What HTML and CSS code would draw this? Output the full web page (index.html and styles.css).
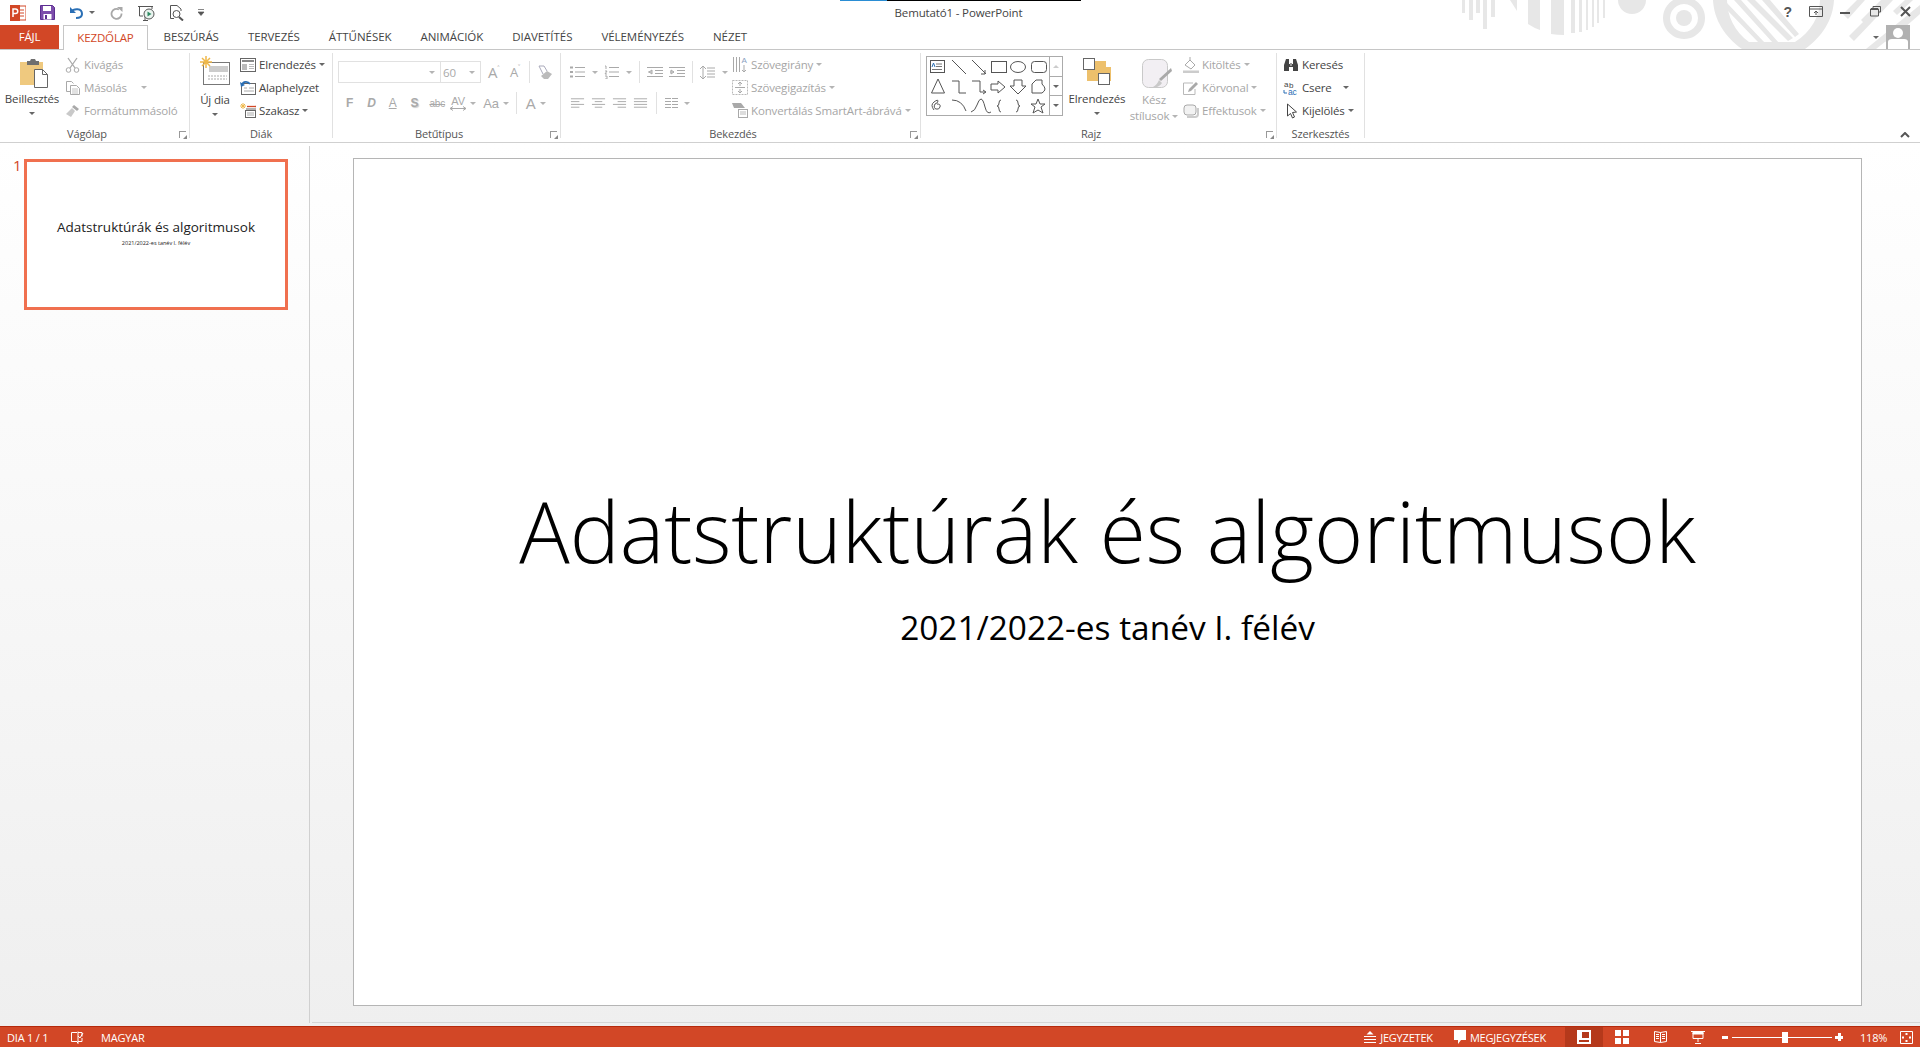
FILE: index.html
```html
<!DOCTYPE html>
<html lang="hu">
<head>
    <meta charset="UTF-8">
    <title>Bemutató1 - PowerPoint</title>
    <link rel="stylesheet" href="styles.css">
</head>
<body>
<svg class="defs" width="0" height="0">
    <symbol id="i-align-l" viewBox="0 0 16 12"><path d="M1 1.500h14M1 4.500h9M1 7.500h14M1 10.500h9" stroke="#a9a9a9" fill="none"/></symbol>
    <symbol id="i-align-c" viewBox="0 0 16 12"><path d="M1 1.500h14M4 4.500h8M1 7.500h14M4 10.500h8" stroke="#a9a9a9" fill="none"/></symbol>
    <symbol id="i-align-r" viewBox="0 0 16 12"><path d="M1 1.500h14M6 4.500h9M1 7.500h14M6 10.500h9" stroke="#a9a9a9" fill="none"/></symbol>
    <symbol id="i-align-j" viewBox="0 0 16 12"><path d="M1 1.500h14M1 4.500h14M1 7.500h14M1 10.500h14" stroke="#a9a9a9" fill="none"/></symbol>
</svg>

<header class="titlebar">
    <svg class="decor" width="460" height="49" viewBox="1460 0 460 49">
        <g fill="#e7e7e7">
            <rect x="1462" y="0" width="3" height="13"/>
            <rect x="1469" y="0" width="4" height="20"/>
            <rect x="1476" y="0" width="4" height="13"/>
            <rect x="1483" y="0" width="4" height="29"/>
            <rect x="1491" y="0" width="4" height="17"/>
            <path d="M1510 0h7v11z"/>
            <path d="M1528 0h12v30q-6-2-12-6z"/>
            <path d="M1551 0h13v35q-7 0-13-1z"/>
            <path d="M1571 0h4v33h-4zM1579 0h3v32h-3zM1586 0h2v30h-2zM1592 0h2v27h-2zM1597 0h2v23h-2zM1603 0h2v18h-2z"/>
            <path d="M1618 0h28a14 14 0 0 1-28 0z"/>
            <path fill-rule="evenodd" d="M1684 -3a21 21 0 1 0 .01 0zM1684 4a14 14 0 1 1-.01 0z"/>
            <circle cx="1684" cy="18" r="8"/>
            <path fill-rule="evenodd" d="M1713 0h121c-1 20-12 37-29 49h-63c-17-12-28-29-29-49zM1727 0c0 16 8 32 22 42h46c16-10 25-26 25-42z"/>
            <path d="M1727 3l38 40h-6l-32-33zM1734 0h7l38 43h-6zM1747 0h8l38 38-5 3zM1762 0h8l29 34-4 3z"/>
            <path d="M1849 36l36-36h8l-39 41zM1843 14l14-14h8l-17 19zM1861 20l20-20h7l-22 25zM1882 38l38-32v8l-33 29zM1905 0h8l-16 15-4-4zM1866 49l54-44v9l-44 35z"/>
        </g>
    </svg>
    <div class="qat">
        <svg class="qat-logo" width="16" height="16" viewBox="0 0 16 16"><rect x="6" y="1" width="10" height="14" fill="#fff" stroke="#d24726"/><path d="M9 5h5M9 8h5M9 11h5" stroke="#d24726"/><rect y="0" width="10" height="16" fill="#d24726"/><path d="M3 12V4h2.500a2 2 0 0 1 0 4.500H3" fill="none" stroke="#fff" stroke-width="1.500"/></svg>
        <svg class="qat-save" width="15" height="15" viewBox="0 0 15 15"><path d="M.5.500h12l2 2v12H.5z" fill="#7c4dab" stroke="#5c2d91"/><rect x="3" y="1" width="8" height="5" fill="#fff"/><rect x="3.500" y="9" width="8" height="5.500" fill="#fff"/><rect x="5" y="10" width="2" height="4" fill="#5c2d91"/></svg>
        <svg class="qat-undo" width="15" height="14" viewBox="0 0 15 14"><path d="M2 6c3-4 11-4 11 2 0 3-3 4-6 4" fill="none" stroke="#2a6fb5" stroke-width="2"/><path d="M1 1v6h6z" fill="#2a6fb5"/></svg>
        <span class="caret qat-caret"></span>
        <svg class="qat-redo" width="13" height="14" viewBox="0 0 13 14"><path d="M9 3.500a5 5 0 1 0 2.500 4" fill="none" stroke="#a8a8a8" stroke-width="1.800"/><path d="M7 1h5.500v5z" fill="#a8a8a8"/></svg>
        <svg class="qat-show" width="18" height="16" viewBox="0 0 18 16"><path d="M1 1.500h15M2.500 2v9H6M15 2v2M6 15.500h5M8 11v4" stroke="#555" fill="none"/><circle cx="12" cy="9" r="5" fill="#eaf4ef" stroke="#555"/><path d="M10.500 6.500v5l4-2.500z" fill="#2f8a63"/></svg>
        <svg class="qat-preview" width="16" height="16" viewBox="0 0 16 16"><path d="M8 .500H1.500v13H5M8 .500l4 3.500v2" fill="none" stroke="#555"/><circle cx="7.500" cy="9" r="3.500" fill="#fff" stroke="#555"/><path d="M10 12l4 3.500" stroke="#555" stroke-width="2"/></svg>
        <svg class="qat-custom" width="7" height="7" viewBox="0 0 7 7"><path d="M0 .500h6M0 3h6l-3 3.500z" fill="#555" stroke="#555" stroke-width=".7"/></svg>
    </div>
    <div class="doc-title">Bemutató1 - PowerPoint</div>
    <div class="win-controls">
        <span class="help">?</span>
        <svg width="14" height="11" viewBox="0 0 14 11"><path d="M.5.500h13v10H.5zM.5 3h13M7 9V5M5 7l2-2 2 2" fill="none" stroke="#555"/></svg>
        <svg width="10" height="11" viewBox="0 0 10 11"><rect y="6" width="10" height="2" fill="#555"/></svg>
        <svg class="win-restore" width="11" height="11" viewBox="0 0 11 11"><path d="M3 2V.500h7.500v5.500H8.500M.5 3h8v7h-8z" fill="none" stroke="#555"/><path d="M1 3h7" stroke="#555" stroke-width="2"/></svg>
        <svg class="win-close" width="11" height="11" viewBox="0 0 11 11"><path d="M1 1l9 9M10 1l-9 9" stroke="#555" stroke-width="2"/></svg>
    </div>
</header>

<nav class="tabs">
    <div class="tab-file">FÁJL</div>
    <div class="tab-active">KEZDŐLAP</div>
    <div class="tab">BESZÚRÁS</div>
    <div class="tab">TERVEZÉS</div>
    <div class="tab">ÁTTŰNÉSEK</div>
    <div class="tab">ANIMÁCIÓK</div>
    <div class="tab">DIAVETÍTÉS</div>
    <div class="tab">VÉLEMÉNYEZÉS</div>
    <div class="tab">NÉZET</div>
    <div class="account">
        <span class="caret"></span>
        <svg width="24" height="24" viewBox="0 0 24 24"><rect width="24" height="24" fill="#b1b1b1"/><circle cx="12" cy="8" r="5" fill="#fff"/><path d="M2 24v-7q0-3 4-3h12q4 0 4 3v7z" fill="#fff"/></svg>
    </div>
</nav>

<section class="ribbon">
    <div class="group group-clip">
        <div class="group-body">
            <div class="big big-paste">
                <svg width="30" height="30" viewBox="0 0 30 30"><path d="M1 4h23v23H1z" fill="#efc97f"/><path d="M8 3h3l1-2h4l1 2h3v4H8z" fill="#6f6f6f"/><path d="M15.500 11.500h8l5 5v13h-13z" fill="#fff" stroke="#666"/><path d="M23.500 11.500v5h5" fill="none" stroke="#666"/></svg>
                <span class="big-label">Beillesztés</span>
                <span class="caret"></span>
            </div>
            <div class="stack">
                <div class="row off"><svg width="16" height="16" viewBox="0 0 16 16"><circle cx="3.500" cy="13" r="2.300" fill="none" stroke="#a9a9a9"/><circle cx="11.500" cy="13" r="2.300" fill="none" stroke="#a9a9a9"/><path d="M5 11L12 1M10 11L3 1" stroke="#a9a9a9" stroke-width="1.300"/></svg>Kivágás</div>
                <div class="row off"><svg width="16" height="16" viewBox="0 0 16 16"><path d="M1.500 1.500h5l2 2M1.500 1.500v10H5M5.500 5.500h6l3 3v6h-9z" fill="none" stroke="#a9a9a9"/><path d="M7 9h6M7 11h6M7 13h6" stroke="#c4c4c4"/></svg>Másolás<span class="caret wide"></span></div>
                <div class="row off"><svg width="16" height="16" viewBox="0 0 16 16"><path d="M9 2l5 4-2 2-5-4z" fill="#a9a9a9"/><path d="M7 5l3 3-4 6-5-3z" fill="#c9c9c9"/></svg>Formátummásoló</div>
            </div>
        </div>
        <div class="group-label has-launcher">Vágólap<span class="launcher"></span></div>
    </div>

    <div class="group group-slides">
        <div class="group-body">
            <div class="big big-new">
                <svg width="30" height="30" viewBox="0 0 30 30"><rect x="3.500" y="6.500" width="26" height="22" fill="#fff" stroke="#777"/><rect x="9" y="10" width="19" height="6" fill="#ccc"/><path d="M8 20h19M8 23h19" stroke="#aaa" stroke-dasharray="2 1"/><path d="M6 0v12M0 6h12M2 2l8 8M10 2l-8 8" stroke="#efb84a" stroke-width="1.500"/></svg>
                <span class="big-label">Új dia</span>
                <span class="caret"></span>
            </div>
            <div class="stack">
                <div class="row"><svg width="16" height="14" viewBox="0 0 16 14"><rect x=".5" y=".5" width="15" height="13" fill="#fff" stroke="#666"/><path d="M2 3h12" stroke="#888" stroke-width="2"/><rect x="2" y="6" width="5" height="6" fill="#bbb"/><path d="M9 6.500h5M9 8.500h5M9 10.500h5" stroke="#bbb"/></svg>Elrendezés<span class="caret"></span></div>
                <div class="row"><svg width="16" height="15" viewBox="0 0 16 15"><rect x="1.500" y="3.500" width="14" height="11" fill="#fff" stroke="#666"/><path d="M4 8h3M9 8h5M4 11h10" stroke="#aaa"/><path d="M2 5c1-4 6-4 8-1" fill="none" stroke="#2a6fb5" stroke-width="1.800"/><path d="M0 2l1 5 4-2z" fill="#2a6fb5"/></svg>Alaphelyzet</div>
                <div class="row"><svg width="16" height="15" viewBox="0 0 16 15"><rect x="5.500" y="7.500" width="10" height="7" fill="#fff" stroke="#666"/><path d="M7 3.500h9" stroke="#d24726" stroke-width="1.300"/><path d="M6 6h10" stroke="#666"/><path d="M3 0v6M0 3h6M1 1l4 4M5 1L1 5" stroke="#efb84a"/><path d="M7 10h7M7 12h7" stroke="#aaa"/></svg>Szakasz<span class="caret"></span></div>
            </div>
        </div>
        <div class="group-label">Diák</div>
    </div>

    <div class="group group-font">
        <div class="group-body grid-rows">
            <div class="tools tools-top">
                <div class="combo combo-name"><span class="caret"></span></div>
                <div class="combo combo-size"><span class="size">60</span><span class="caret"></span></div>
                <span class="glyph g-grow">A<sup>˄</sup></span>
                <span class="glyph g-shrink">A<sup>˅</sup></span>
                <span class="vsep"></span>
                <svg class="g-eraser" width="15" height="15" viewBox="0 0 15 15"><path d="M9 6l5 3-4 5H6L3 11z" fill="#bbb"/><path d="M5 9L1 1h5l3 5" fill="none" stroke="#aab" /></svg>
            </div>
            <div class="tools tools-bottom">
                <span class="fmt fmt-f">F</span>
                <span class="fmt fmt-d">D</span>
                <span class="fmt fmt-a">A</span>
                <span class="fmt fmt-s">S</span>
                <span class="fmt fmt-abc">abc</span>
                <span class="fmt-av">AV<svg width="16" height="5" viewBox="0 0 16 5"><path d="M0 2.500h16M3 .5l-3 2 3 2M13 .5l3 2-3 2" fill="none" stroke="#a9a9a9"/></svg></span>
                <span class="caret"></span>
                <span class="fmt fmt-aa">Aa</span>
                <span class="caret"></span>
                <span class="vsep"></span>
                <span class="fmt fmt-color">A</span>
                <span class="caret"></span>
            </div>
        </div>
        <div class="group-label has-launcher">Betűtípus<span class="launcher"></span></div>
    </div>

    <div class="group group-para">
        <div class="group-body">
            <div class="grid-rows para-left">
                <div class="tools para-top">
                    <svg width="15" height="14" viewBox="0 0 15 14"><path d="M5 2.500h10M5 7h10M5 11.500h10" stroke="#a9a9a9"/><path d="M0 1.500h3v2H0zM0 6h3v2H0zM0 10.500h3v2H0z" fill="#a9a9a9"/></svg>
                    <span class="caret"></span>
                    <svg class="p-num" width="15" height="14" viewBox="0 0 15 14"><path d="M5 2.500h10M5 7h10M5 11.500h10" stroke="#a9a9a9"/><path d="M1 1h1v3M1 6h2L1 9h2M1 11h2v3H1" fill="none" stroke="#a9a9a9"/></svg>
                    <span class="caret"></span>
                    <span class="vsep"></span>
                    <svg width="16" height="11" viewBox="0 0 16 11"><path d="M0 .5h16M8 3.500h8M8 6.500h8M0 9.500h16M5 3L2 5l3 2zM1 5h4" stroke="#a9a9a9" fill="none"/></svg>
                    <svg class="p-ind" width="16" height="11" viewBox="0 0 16 11"><path d="M0 .5h16M8 3.500h8M8 6.500h8M0 9.500h16M2 3l3 2-3 2zM1 5h4" stroke="#a9a9a9" fill="none"/></svg>
                    <span class="vsep"></span>
                    <svg width="15" height="15" viewBox="0 0 15 15"><path d="M3 1v13M0 4l3-3 3 3M0 11l3 3 3-3M7 3h8M7 6h8M7 9h8M7 12h8" stroke="#a9a9a9" fill="none"/></svg>
                    <span class="caret"></span>
                </div>
                <div class="tools para-bottom">
                    <svg width="15" height="12"><use href="#i-align-l"/></svg>
                    <svg width="15" height="12"><use href="#i-align-c"/></svg>
                    <svg width="15" height="12"><use href="#i-align-r"/></svg>
                    <svg width="15" height="12"><use href="#i-align-j"/></svg>
                    <span class="vsep"></span>
                    <svg width="13" height="12" viewBox="0 0 13 12"><path d="M0 1.500h6M7 1.500h6M0 4.500h6M7 4.500h6M0 7.500h6M7 7.500h6M0 10.500h6M7 10.500h6" stroke="#a9a9a9"/></svg>
                    <span class="caret"></span>
                </div>
            </div>
            <div class="stack para-right">
                <div class="row off"><svg width="16" height="17" viewBox="0 0 16 17"><path d="M1.500 1v15M4.500 1v15M7.500 1v15" stroke="#a9a9a9"/><text x="9.500" y="7" font-size="8" fill="#8aa0c0" font-family="Liberation Sans">A</text><path d="M12 9v7M10 14l2 2 2-2" fill="none" stroke="#a9a9a9"/></svg>Szövegirány<span class="caret"></span></div>
                <div class="row off"><svg width="16" height="15" viewBox="0 0 16 15"><rect x=".5" y=".5" width="15" height="14" fill="none" stroke="#b9b9b9" stroke-dasharray="2 1"/><path d="M8 2v4M6 4l2-2 2 2M8 13V9M6 11l2 2 2-2M3 7.500h10" fill="none" stroke="#a9a9a9"/></svg>Szövegigazítás<span class="caret"></span></div>
                <div class="row off"><svg width="16" height="15" viewBox="0 0 16 15"><path d="M0 0h9l4 5H2z" fill="#a9a9a9"/><rect x="6.500" y="6.500" width="9" height="8" fill="#fff" stroke="#a9a9a9"/><path d="M8 9h6M8 11h6" stroke="#bbb"/></svg>Konvertálás SmartArt-ábrává<span class="caret"></span></div>
            </div>
        </div>
        <div class="group-label has-launcher">Bekezdés<span class="launcher"></span></div>
    </div>

    <div class="group group-draw">
        <div class="group-body">
            <div class="gallery">
                <svg class="shapes" width="122" height="58" viewBox="0 0 122 58" fill="none" stroke="#555">
                    <rect x="3.500" y="3.500" width="14" height="12" fill="#fff"/><path d="M9 7h6M9 9.500h6M5 12.500h10" stroke="#777"/><path d="M5 10l1.500-4 1.500 4" stroke="#2a6fb5"/>
                    <path d="M25 3l14 14M45 3l14 14M58 13v4h-4"/>
                    <rect x="64.500" y="4.500" width="15" height="11"/><ellipse cx="91" cy="10" rx="7.500" ry="5.500"/><rect x="104.500" y="4.500" width="15" height="11" rx="3"/>
                    <path d="M11 22l-6.500 14h13zM25 24h7v12h7M45 24h8v11h5M56 33l3 2-3 2M71 24v3h-7v6h7v3l7-6zM87 23v6h-4l8 8 8-8h-4v-6zM105 36v-9l4-4h6v4q3 3 3 5t-3 4z"/>
                    <path d="M7 53q-4-5 0-8t4-1-3 3q-2 4 1 5t4-2-3-3M25 43q10 0 14 11M44 55q4-1 6-7t4-6 4 8 6 5"/>
                    <path d="M74 43q-2 0-2 3t-2 3q2 0 2 3t2 3M89 43q2 0 2 3t2 3q-2 0-2 3t-2 3M111 42l2 5h5l-4 3 2 6-5-3-5 3 2-6-4-3h5z"/>
                </svg>
                <div class="gallery-scroll">
                    <span class="scroll-btn"><i class="tri-up"></i></span>
                    <span class="scroll-btn"><i class="tri-down"></i></span>
                    <span class="scroll-btn"><i class="tri-more"></i></span>
                </div>
            </div>
            <div class="big big-arrange">
                <svg width="28" height="28" viewBox="0 0 28 28"><rect x="4" y="9" width="24" height="14" fill="#edc06c"/><rect x="12" y="3" width="11" height="13" fill="#edc06c"/><rect x=".5" y=".5" width="11" height="11" fill="#fff" stroke="#666"/><rect x="15.500" y="15.500" width="11" height="11" fill="#fff" stroke="#666"/></svg>
                <span class="big-label">Elrendezés</span>
                <span class="caret"></span>
            </div>
            <div class="big big-styles off">
                <svg width="30" height="30" viewBox="0 0 30 30"><rect x=".5" y=".5" width="25" height="28" rx="6" fill="#f2eff3" stroke="#c9c9c9"/><path d="M29 9L17 20l2 2L30 12z" fill="#a9a9a9"/><path d="M17 21l3 3q-3 5-9 4 4-2 6-7z" fill="#c9c9c9"/></svg>
                <span class="big-label">Kész<br>stílusok<span class="caret"></span></span>
            </div>
            <div class="stack">
                <div class="row off"><svg width="16" height="16" viewBox="0 0 16 16"><path d="M2 8l5-5 5 5-4 4z" fill="#fff" stroke="#a9a9a9"/><path d="M7 3V0" stroke="#a9a9a9"/><rect y="13.500" width="16" height="2.500" fill="#ccc"/></svg>Kitöltés<span class="caret"></span></div>
                <div class="row off"><svg width="16" height="14" viewBox="0 0 16 14"><path d="M10 2H.5v11.500H12V8" fill="none" stroke="#b9b9b9"/><path d="M13 1l2 2-7 7-3 1 1-3z" fill="#a9a9a9"/></svg>Körvonal<span class="caret"></span></div>
                <div class="row off"><svg width="16" height="14" viewBox="0 0 16 14"><rect x="1" y="1" width="12" height="10" rx="3" fill="#f2f2f2" stroke="#a9a9a9"/><path d="M4 13h8q3 0 3-3V4" fill="none" stroke="#ccc" stroke-width="2"/></svg>Effektusok<span class="caret"></span></div>
            </div>
        </div>
        <div class="group-label has-launcher">Rajz<span class="launcher"></span></div>
    </div>

    <div class="group group-edit">
        <div class="group-body">
            <div class="stack">
                <div class="row"><svg width="16" height="14" viewBox="0 0 16 14"><path d="M1 7L3 1h3v5h4V1h3l2 6v6h-5V9H6v4H1z" fill="#444"/><path d="M7 5h2v3H7z" fill="#999"/></svg>Keresés</div>
                <div class="row"><svg width="16" height="16" viewBox="0 0 16 16"><text x="1" y="7" font-size="8" fill="#444" font-family="Liberation Sans">a</text><text x="6" y="8" font-size="8" fill="#444" font-family="Liberation Sans">b</text><text x="5" y="15" font-size="8.500" fill="#2a6fb5" font-family="Liberation Sans">ac</text><path d="M1 10v3h3" fill="none" stroke="#2a6fb5"/></svg>Csere<span class="caret wide-s"></span></div>
                <div class="row"><svg width="16" height="16" viewBox="0 0 16 16"><path d="M4.500 1v12l3-2.500 2 4.500 2-1-2-4.500 4-.5z" fill="#fff" stroke="#444"/></svg>Kijelölés<span class="caret"></span></div>
            </div>
        </div>
        <div class="group-label">Szerkesztés</div>
    </div>

    <svg class="collapse" width="10" height="6" viewBox="0 0 10 6"><path d="M1 5l4-4 4 4" fill="none" stroke="#555" stroke-width="2"/></svg>
</section>

<main class="workspace">
    <aside class="thumbs">
        <span class="thumb-no">1</span>
        <div class="thumb">
            <div class="thumb-title">Adatstruktúrák és algoritmusok</div>
            <div class="thumb-sub">2021/2022-es tanév I. félév</div>
        </div>
    </aside>
    <div class="stage">
        <div class="slide">
            <h1>Adatstruktúrák és algoritmusok</h1>
            <p>2021/2022-es tanév I. félév</p>
        </div>
    </div>
</main>

<footer class="status">
    <span class="st-count">DIA 1 / 1</span>
    <svg class="st-check" width="14" height="14" viewBox="0 0 14 14" fill="none" stroke="#fff"><path d="M7 2.500H1.500v9H7l1 2v-12M8 2.500h4v4M8 11.500h4V8"/><path d="M8 6l2 2 3-5"/></svg>
    <span class="st-lang">MAGYAR</span>
    <span class="st-fill"></span>
    <svg width="12" height="13" viewBox="0 0 12 13"><path d="M6 0L2.500 3.500h7z" fill="#fff"/><path d="M0 5.500h12M0 8.500h12M0 11.500h12" stroke="#fff"/></svg>
    <span class="st-notes">JEGYZETEK</span>
    <svg width="12" height="14" viewBox="0 0 12 14"><path d="M0 0h12v10H7l-3 4v-4H0z" fill="#fff"/></svg>
    <span class="st-comments">MEGJEGYZÉSEK</span>
    <div class="views">
        <span class="view view-on"><svg width="14" height="14" viewBox="0 0 14 14"><path fill-rule="evenodd" d="M0 0h14v14H0zM5 2v6h7V2zM2 10v2h10v-2z" fill="#fff"/></svg></span>
        <span class="view"><svg width="14" height="14" viewBox="0 0 14 14"><path d="M0 0h6v6H0zM8 0h6v6H8zM0 8h6v6H0zM8 8h6v6H8z" fill="#fff"/></svg></span>
        <span class="view"><svg width="13" height="14" viewBox="0 0 13 14" fill="none" stroke="#fff"><path d="M.5 1.500l6 1 6-1v10l-6 1-6-1zM6.500 2.500v10M2 4.500h3M2 6.500h3M2 8.500h3M8 4.500h3M8 6.500h3M8 8.500h3"/></svg></span>
        <span class="view"><svg width="14" height="14" viewBox="0 0 14 14" fill="none" stroke="#fff"><path d="M0 1.500h14M2 3v5.500h10V3M7 9v3M4 13.500h6"/><path d="M2 2h10v2H2z" fill="#fff"/></svg></span>
    </div>
    <span class="zoom-btn minus"></span>
    <div class="slider"><span class="slider-thumb"></span></div>
    <span class="zoom-btn plus"></span>
    <span class="st-zoom">118%</span>
    <svg class="st-fit" width="13" height="13" viewBox="0 0 13 13" fill="none" stroke="#fff"><path d="M.5.500h12v12H.5zM6.500 2v2M5 3h3M6.500 9v2M5 10h3M2 6.500h2M3 5v3M9 6.500h2M10 5v3"/></svg>
</footer>
</body>
</html>
```

FILE: styles.css
```css
* {
    box-sizing: border-box;
}
html, body {
    margin: 0;
    height: 100%;
    overflow: hidden;
}
body {
    display: flex;
    flex-direction: column;
    font-family: "Open Sans", "Noto Sans", sans-serif;
    font-size: 11.5px;
    letter-spacing: -.15px;
    color: #444;
    background-color: #fff;
}
svg {
    display: block;
    flex: none;
}
.defs {
    position: absolute;
}

/* title bar */
.titlebar {
    position: relative;
    flex: none;
    height: 25px;
    display: flex;
    align-items: center;
}
.titlebar::before {
    content: "";
    position: absolute;
    top: 0;
    left: 840px;
    width: 241px;
    height: 1px;
    background: linear-gradient(90deg, #2a8dd4 47px, #000 47px);
}
.decor {
    position: absolute;
    top: 0;
    right: 0;
}
.qat {
    position: relative;
    display: flex;
    align-items: center;
    padding-left: 10px;
}
.qat-save { margin-left: 14px; }
.qat-undo { margin-left: 14px; }
.qat-caret { margin-left: 5px; }
.qat-redo { margin-left: 15px; }
.qat-show { margin-left: 14px; }
.qat-preview { margin-left: 14px; }
.qat-custom { margin-left: 13px; }
.doc-title {
    position: absolute;
    left: 0;
    right: 0;
    top: 4px;
    padding-right: 3px;
    text-align: center;
    line-height: 17px;
}
.win-controls {
    position: absolute;
    top: 6px;
    right: 9px;
    display: flex;
    align-items: flex-start;
    gap: 17px;
}
.win-restore { margin-left: 3px; }
.win-close { margin-left: 2px; }
.help {
    font: bold 14px/12px "Liberation Sans", sans-serif;
    color: #555;
}

/* tabs */
.tabs {
    flex: none;
    height: 25px;
    display: flex;
    border-bottom: 1px solid #c6c6c6;
    position: relative;
    line-height: 24px;
}
.tab-file {
    width: 59px;
    height: 24px;
    background-color: #d24726;
    color: #fff;
    text-align: center;
}
.tab-active {
    width: 85px;
    height: 25px;
    margin-left: 4px;
    color: #d24726;
    text-align: center;
    background-color: #fff;
    border: 1px solid #c6c6c6;
    border-bottom: 0;
    margin-right: 1px;
}
.tab {
    padding: 0 14.5px;
    white-space: nowrap;
    letter-spacing: -.05px;
}
.account {
    position: absolute;
    right: 10px;
    top: 0;
    display: flex;
    align-items: center;
    gap: 7px;
}

.caret {
    display: inline-block;
    flex: none;
    width: 0;
    height: 0;
    border: 3px solid transparent;
    border-top: 3px solid #666;
    border-bottom: 0;
}
.off .caret, .tools .caret {
    border-top-color: #b4b4b4;
}

/* ribbon */
.ribbon {
    position: relative;
    flex: none;
    height: 93px;
    display: flex;
    border-bottom: 1px solid #d0d0d0;
    padding-top: 3px;
}
.group {
    display: flex;
    flex-direction: column;
    height: 85px;
    border-right: 1px solid #e1e1e1;
}
.group-clip { width: 190px; }
.group-slides { width: 143px; }
.group-font { width: 228px; }
.group-para { width: 360px; }
.group-draw { width: 356px; }
.group-edit { width: 88px; }
.group-body {
    display: flex;
    height: 72px;
    flex: none;
}
.group-label {
    position: relative;
    text-align: center;
    font-size: 11px;
    line-height: 14px;
    margin-top: 2px;
    color: #555;
}
.has-launcher {
    padding-right: 15px;
}
.launcher {
    position: absolute;
    right: 3px;
    top: 4px;
    width: 7px;
    height: 7px;
    border-top: 1px solid #999;
    border-left: 1px solid #999;
}
.launcher::after {
    content: "";
    position: absolute;
    right: -1px;
    bottom: -1px;
    border: 2px solid transparent;
    border-right-color: #888;
    border-bottom-color: #888;
}
.stack {
    display: flex;
    flex-direction: column;
}
.row {
    height: 23px;
    display: flex;
    align-items: center;
    gap: 4px;
    white-space: nowrap;
}
.row svg {
    width: 16px;
    margin-right: -1px;
}
.row .caret {
    margin-left: -1px;
}
.row .wide {
    margin-left: 10px;
}
.row .wide-s {
    margin-left: 7px;
}
.off {
    color: #a6a6a6;
}
.big {
    display: flex;
    flex-direction: column;
    align-items: center;
    text-align: center;
}
.big-label {
    line-height: 16px;
    white-space: nowrap;
}
.big-paste {
    width: 64px;
    padding-top: 5px;
}
.big-paste svg { margin-left: 3px; }
.big-paste .big-label { margin-top: 3px; }
.big-paste .caret { margin-top: 5px; }
.group-clip .stack {
    margin-left: 1px;
}
.big-new {
    width: 50px;
    padding-top: 3px;
}
.big-new .big-label { margin-top: 6px; }
.big-new .caret { margin-top: 5px; }

/* font group */
.grid-rows {
    display: flex;
    flex-direction: column;
    gap: 9px;
    padding-top: 8px;
}
.group-font .grid-rows {
    padding-left: 5px;
}
.tools {
    height: 22px;
    display: flex;
    align-items: center;
    white-space: nowrap;
    color: #a9a9a9;
}
.vsep {
    width: 1px;
    height: 22px;
    background-color: #e1e1e1;
}
.combo {
    height: 22px;
    border: 1px solid #e1e1e1;
    display: flex;
    align-items: center;
    justify-content: flex-end;
    padding-right: 5px;
}
.combo-name { width: 103px; }
.combo-size {
    width: 41px;
    margin-left: -1px;
    justify-content: space-between;
    padding-left: 2px;
}
.size { color: #a9a9a9; }
.glyph {
    font-size: 15px;
    line-height: 22px;
}
.glyph sup {
    font-size: 8px;
    line-height: 0;
    vertical-align: 6px;
}
.g-grow { margin-left: 7px; width: 22px; }
.g-shrink { font-size: 13px; width: 19px; }
.g-eraser { margin-left: 8px; }
.fmt {
    font-family: "Liberation Sans", sans-serif;
    font-weight: bold;
    font-size: 12px;
}
.fmt-f { margin-left: 8px; }
.fmt-d { margin-left: 14px; font-style: italic; }
.fmt-a { margin-left: 13px; text-decoration: underline; font-weight: normal; }
.fmt-s { margin-left: 14px; text-shadow: 1px 1px 1px #ccc; }
.fmt-abc { margin-left: 11px; font-size: 10px; font-weight: normal; text-decoration: line-through; }
.fmt-av {
    margin-left: 5px;
    display: flex;
    flex-direction: column;
    align-items: center;
    font: 11px/10px "Liberation Sans", sans-serif;
}
.tools-bottom .caret { margin-left: 4px; }
.fmt-aa { margin-left: 7px; font-weight: normal; font-size: 13px; }
.tools-bottom .vsep { margin-left: 7px; }
.fmt-color { margin-left: 9px; font-weight: normal; font-size: 15px; }

/* paragraph group */
.para-left {
    padding-left: 9px;
    width: 171px;
    flex: none;
}
.para-top .caret { margin-left: 7px; }
.para-top .p-num { margin-left: 6px; }
.para-top .vsep { margin-left: 7px; }
.para-top .vsep + svg { margin-left: 7px; }
.para-top .p-ind { margin-left: 6px; }
.para-top svg:last-of-type { margin-left: 7px; }
.para-bottom { gap: 6px; }
.para-bottom .vsep { margin-left: 2px; margin-right: 2px; }

/* drawing group */
.gallery {
    display: flex;
    width: 137px;
    height: 60px;
    margin: 3px 0 0 5px;
    border: 1px solid #ababab;
}
.gallery-scroll {
    width: 14px;
    display: flex;
    flex-direction: column;
    border-left: 1px solid #ababab;
}
.scroll-btn {
    flex: 1;
    display: flex;
    align-items: center;
    justify-content: center;
    border-bottom: 1px solid #ababab;
}
.scroll-btn:last-child { border-bottom: 0; }
.tri-up, .tri-down, .tri-more {
    width: 0;
    height: 0;
    border: 3px solid transparent;
}
.tri-up { border-bottom-color: #ccc; border-top: 0; }
.tri-down { border-top-color: #666; border-bottom: 0; }
.tri-more { border-top-color: #666; border-bottom: 0; box-shadow: 0 -3px 0 -2px #666; }
.big-arrange {
    width: 60px;
    margin-left: 4px;
    padding-top: 5px;
}
.big-arrange .big-label { margin-top: 5px; }
.big-arrange .caret { margin-top: 5px; }
.big-styles {
    width: 50px;
    margin-left: 2px;
    padding-top: 6px;
}
.big-styles svg { margin-left: 6px; }
.big-styles .big-label { margin-top: 3px; }
.big-styles .caret { margin-left: 3px; vertical-align: 2px; }
.group-draw .stack { margin-left: 4px; }
.group-edit .stack { margin-left: 6px; }
.collapse {
    position: absolute;
    right: 10px;
    top: 82px;
}

/* workspace */
.workspace {
    flex: 1;
    display: flex;
    min-height: 0;
    background: linear-gradient(#fff, #efefef);
}
.thumbs {
    position: relative;
    width: 310px;
    flex: none;
    margin: 3px 0;
    border-right: 1px solid #d0d0d0;
    padding: 13px 0 0 24px;
}
.thumb-no {
    position: absolute;
    left: 13px;
    top: 9px;
    color: #d24726;
    font-size: 15px;
}
.thumb {
    width: 264px;
    height: 151px;
    border: 3px solid #f0704f;
    background-color: #fff;
    text-align: center;
    padding-top: 55px;
    color: #222;
    letter-spacing: 0;
}
.thumb-title {
    font-size: 13.500px;
    line-height: 20px;
}
.thumb-sub {
    font-size: 5.500px;
    line-height: 8px;
    margin-top: 2px;
}
.stage {
    flex: 1;
    padding: 15px 58px 16px 41px;
    border-bottom: 1px solid #d5d5d5;
    margin: 0 0 3px 2px;
}
.slide {
    height: 100%;
    background-color: #fff;
    border: 1px solid #b5b5b5;
    text-align: center;
    color: #000;
    padding-top: 312px;
    letter-spacing: 0;
}
.slide h1 {
    margin: 0;
    font-size: 84px;
    font-weight: 300;
    line-height: 120px;
}
.slide p {
    margin: 15px 0 0;
    font-size: 33.400px;
    font-weight: 400;
    line-height: 42px;
}

/* status bar */
.status {
    flex: none;
    height: 21px;
    display: flex;
    align-items: center;
    background-color: #d24726;
    border-top: 1px solid #b5290c;
    color: #fff;
    font-size: 11px;
    letter-spacing: -.2px;
    white-space: nowrap;
}
.st-count { margin-left: 7px; width: 42px; }
.st-check { margin-left: 21px; }
.st-lang { margin-left: 17px; }
.st-fill { flex: 1; }
.st-notes { margin: 0 21px 0 4px; }
.st-comments { margin: 0 19px 0 4px; }
.views {
    display: flex;
    align-self: stretch;
}
.view {
    width: 38px;
    display: flex;
    align-items: center;
    justify-content: center;
}
.view-on { background-color: #b5391b; }
.zoom-btn {
    position: relative;
    height: 3px;
    background-color: #fff;
}
.minus {
    width: 6px;
    margin-left: 5px;
}
.plus {
    width: 8px;
}
.plus::after {
    content: "";
    position: absolute;
    left: 2.500px;
    top: -2.500px;
    width: 3px;
    height: 8px;
    background-color: #fff;
}
.slider {
    position: relative;
    width: 100px;
    height: 1px;
    background-color: #fff;
    margin: 0 3px 0 4px;
}
.slider-thumb {
    position: absolute;
    left: 50px;
    top: -5px;
    width: 6px;
    height: 11px;
    background-color: #fff;
}
.st-zoom { margin-left: 17px; width: 27px; }
.st-fit { margin: 0 7px 0 13px; }
```
